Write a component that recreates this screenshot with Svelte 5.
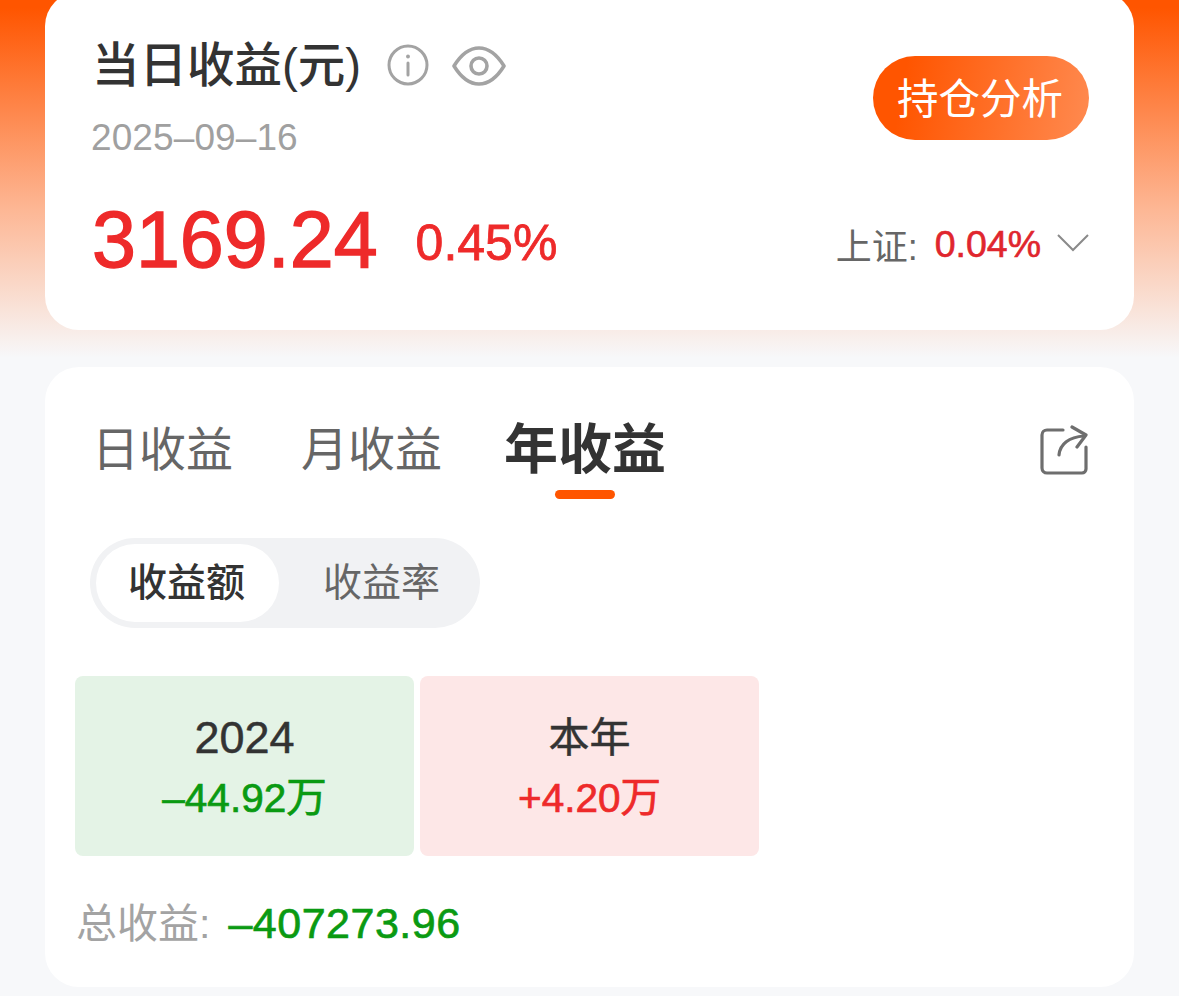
<script>
    const tabs = [
        { label: '日收益' },
        { label: '月收益' },
        { label: '年收益', active: true }
    ];
    const cells = [
        { title: '2024', value: '–44.92万', tone: 'down', year: true },
        { title: '本年', value: '+4.20万', tone: 'up' }
    ];
</script>

<div class="page">
    <section class="card summary">
        <div class="head">
            <div>
                <div class="title-row">
                    <h1>当日收益(元)</h1>
                    <svg class="info" width="42" height="42" viewBox="0 0 42 42" fill="none" stroke="#a3a3a3" stroke-width="3" stroke-linecap="round">
                        <circle cx="21" cy="21" r="19" />
                        <line x1="21" y1="19" x2="21" y2="31" />
                        <circle cx="21" cy="12.5" r="1.2" fill="#a3a3a3" stroke-width="1.5" />
                    </svg>
                    <svg class="eye" width="54" height="40" viewBox="0 0 54 40" fill="none" stroke="#a3a3a3" stroke-width="3.6" stroke-linejoin="round">
                        <path d="M2 20C10 7 18 2 27 2s17 5 25 18c-8 13-16 18-25 18S10 33 2 20z" />
                        <circle cx="27" cy="20" r="8" />
                    </svg>
                </div>
                <div class="date">2025–09–16</div>
            </div>
            <button class="analysis">持仓分析</button>
        </div>
        <div class="figures">
            <span class="amount">3169.24</span>
            <span class="percent">0.45%</span>
            <span class="index">
                <span class="index-label">上证:</span>
                <span class="index-value">0.04%</span>
                <svg width="32" height="20" viewBox="0 0 32 20" fill="none" stroke="#8a8a8a" stroke-width="2">
                    <polyline points="1,2 16,17 31,2" />
                </svg>
            </span>
        </div>
    </section>

    <section class="card detail">
        <div class="tabs">
            {#each tabs as tab}
                <div class="tab" class:active={tab.active}>{tab.label}</div>
            {/each}
            <svg class="share" width="50" height="50" viewBox="0 0 50 50" fill="none" stroke="#6e6e6e" stroke-width="3.2" stroke-linecap="round" stroke-linejoin="round">
                <path d="M24 5H8a5 5 0 0 0-5 5v33a5 5 0 0 0 5 5h35a4 4 0 0 0 4-4V22" />
                <path d="M20 30c1-11 10-18 25-19" />
                <polyline points="33,2 47,10 38,22" />
            </svg>
        </div>

        <div class="switch">
            <div class="option selected">收益额</div>
            <div class="option rate">收益率</div>
        </div>

        <div class="cells">
            {#each cells as cell}
                <div class="cell {cell.tone}">
                    <div class="cell-title" class:year={cell.year}>{cell.title}</div>
                    <div class="cell-value">{cell.value}</div>
                </div>
            {/each}
        </div>

        <div class="total">
            <span class="total-label">总收益:</span>
            <span class="total-value">–407273.96</span>
        </div>
    </section>
</div>

<style>
    :global(body) {
        background: #f7f8fa;
    }
    .page {
        height: 996px;
        overflow: hidden;
        box-sizing: border-box;
        padding: 0 45px;
        background: linear-gradient(180deg, #ff5500 0, #ff5500 8px, #fdb795 210px, #f7f8fa 358px);
        font-family: "Liberation Sans", "Noto Sans CJK SC", sans-serif;
        color: #333;
    }
    .card {
        background: #fff;
        border-radius: 34px;
    }
    .summary {
        margin-top: -8px;
        height: 338px;
        box-sizing: border-box;
        padding: 45px 45px 0 47px;
    }
    .head {
        display: flex;
        justify-content: space-between;
        align-items: flex-start;
    }
    .title-row {
        display: flex;
        align-items: center;
        height: 58px;
    }
    h1 {
        margin: 0;
        font-size: 47.5px;
        font-weight: 500;
        line-height: 58px;
        color: #333;
    }
    .info {
        margin-left: 26px;
        margin-top: -2px;
    }
    .eye {
        margin-left: 23px;
    }
    .date {
        margin-top: 21px;
        margin-left: -1px;
        font-size: 37px;
        letter-spacing: 0.1px;
        line-height: 44px;
        color: #a0a0a0;
    }
    .analysis {
        margin-top: 19px;
        width: 216px;
        height: 84px;
        border: none;
        border-radius: 42px;
        padding: 0 2px 4px 0;
        background: linear-gradient(100deg, #ff5500 15%, #ff8a50 100%);
        color: #fff;
        font-family: inherit;
        font-size: 41.5px;
    }
    .figures {
        display: flex;
        align-items: center;
        margin-top: 35px;
    }
    .amount {
        font-size: 79px;
        line-height: 90px;
        color: #ee2a2a;
        -webkit-text-stroke: 1.4px #ee2a2a;
    }
    .percent {
        margin: 6px 0 0 38px;
        font-size: 50px;
        color: #ee2a2a;
        -webkit-text-stroke: 0.8px #ee2a2a;
    }
    .index {
        margin-left: auto;
        display: flex;
        align-items: center;
        padding-top: 8px;
        font-size: 37.5px;
    }
    .index-label {
        font-size: 36px;
        color: #666;
    }
    .index-value {
        margin-left: 17px;
        color: #e0262e;
        -webkit-text-stroke: 0.6px #e0262e;
    }
    .index svg {
        margin-left: 16px;
        margin-top: -3px;
    }
    .detail {
        margin-top: 37px;
        height: 620px;
        box-sizing: border-box;
        padding: 48px 45px 0 30px;
    }
    .tabs {
        display: flex;
        align-items: center;
        height: 70px;
        padding-left: 17px;
        gap: 68px;
    }
    .tab {
        position: relative;
        font-size: 47px;
        line-height: 70px;
        color: #666;
    }
    .tab.active {
        margin-left: -6px;
        font-size: 54px;
        font-weight: 700;
        color: #333;
    }
    .tab.active::after {
        content: "";
        position: absolute;
        left: 50%;
        bottom: -14px;
        width: 60px;
        height: 9px;
        margin-left: -30px;
        border-radius: 5px;
        background: #ff5500;
    }
    .share {
        margin-left: auto;
    }
    .switch {
        display: inline-flex;
        margin: 53px 0 0 15px;
        padding: 6px;
        border-radius: 45px;
        background: #f1f2f4;
    }
    .option {
        width: 183px;
        height: 78px;
        border-radius: 39px;
        padding-right: 2px;
        box-sizing: content-box;
        font-size: 39px;
        line-height: 78px;
        text-align: center;
        color: #666;
    }
    .option.rate {
        padding: 0 0 0 10px;
        width: 185px;
    }
    .option.selected {
        width: 181px;
        background: #fff;
        color: #333;
        font-weight: 500;
    }
    .cells {
        display: flex;
        gap: 6px;
        margin-top: 48px;
    }
    .cell {
        width: 339px;
        height: 180px;
        border-radius: 8px;
        box-sizing: border-box;
        padding-top: 36px;
        text-align: center;
    }
    .cell.down {
        background: #e4f3e6;
    }
    .cell.up {
        background: #fde7e7;
    }
    .cell-title {
        font-size: 41px;
        line-height: 52px;
        color: #333;
        -webkit-text-stroke: 0.5px #333;
    }
    .cell-title.year {
        font-size: 45px;
    }
    .cell-value {
        margin-top: 8px;
        font-size: 40.5px;
        line-height: 52px;
        -webkit-text-stroke: 0.7px currentColor;
    }
    .down .cell-value {
        color: #0a9a12;
    }
    .up .cell-value {
        color: #ee2a2a;
    }
    .total {
        display: flex;
        align-items: center;
        margin-top: 34px;
        padding-left: 1px;
    }
    .total-label {
        font-size: 41px;
        color: #a3a3a3;
    }
    .total-value {
        margin: 6px 0 0 18px;
        font-size: 43px;
        letter-spacing: 0.5px;
        color: #0a9a12;
        -webkit-text-stroke: 0.7px #0a9a12;
    }
</style>
